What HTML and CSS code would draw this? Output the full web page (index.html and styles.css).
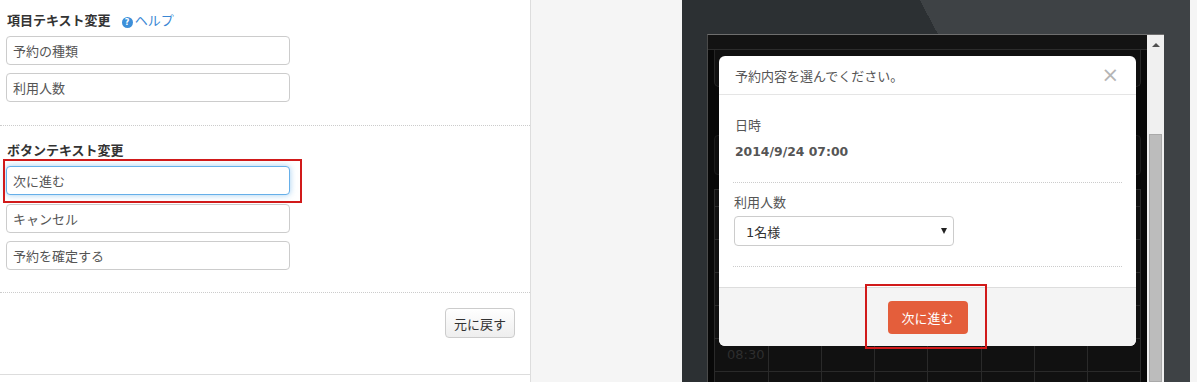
FILE: index.html
```html
<!DOCTYPE html>
<html>

<head>
    <meta charset="utf-8">
    <title>ボタンテキスト設定</title>
    <link rel="stylesheet" href="styles.css">
</head>

<body>
    <div id="page">
        <div id="settings">
            <div class="section">
                <h3 class="label">項目テキスト変更<a class="help" href="#"><span class="helpIcon">?</span>ヘルプ</a></h3>
                <input class="textInput" type="text" value="予約の種類">
                <input class="textInput" type="text" value="利用人数">
            </div>
            <div class="section">
                <h3 class="label">ボタンテキスト変更</h3>
                <div class="marked markInput">
                    <input class="textInput focused" type="text" value="次に進む">
                </div>
                <input class="textInput afterMark" type="text" value="キャンセル">
                <input class="textInput" type="text" value="予約を確定する">
            </div>
            <div class="section actions">
                <button class="resetButton">元に戻す</button>
            </div>
        </div>

        <div id="gutter"></div>

        <div id="preview">
            <div id="screen">
                <div id="calendar">
                    <div class="topBar"></div>
                    <div class="summary"></div>
                    <div class="dayBox"></div>
                    <div id="timeGrid"></div>

                    <!-- modal shown over the calendar -->
                    <div id="modal">
                        <div class="modalHeader">
                            <span>予約内容を選んでください。</span>
                            <span class="close">&times;</span>
                        </div>
                        <div class="modalBody">
                            <div class="field">
                                <div class="fieldName">日時</div>
                                <div class="fieldValue">2014/9/24 07:00</div>
                            </div>
                            <div class="field">
                                <div class="fieldName">利用人数</div>
                                <div class="select">
                                    <span>1名様</span>
                                    <span class="caret"></span>
                                </div>
                            </div>
                        </div>
                        <div class="modalFooter">
                            <div class="marked markButton">
                                <button class="nextButton">次に進む</button>
                            </div>
                        </div>
                    </div>
                </div>
                <div id="scrollbar">
                    <div class="arrowUp"></div>
                    <div class="thumb"></div>
                </div>
            </div>
        </div>

        <div id="edge"></div>
    </div>
    <script type="text/javascript">
    // background time table under the modal (only 08:30 shows below it)
    var times = ["", "", "", "", "", "08:30", ""];
    var grid = document.getElementById("timeGrid");

    for (var i = 0; i < times.length; i++) {
        var row = document.createElement("div");
        row.className = i == 0 ? "timeRow headRow" : "timeRow";
        var label = document.createElement("div");
        label.className = "timeLabel";
        label.innerText = times[i];
        row.appendChild(label);
        for (var j = 0; j < 7; j++) {
            var slot = document.createElement("div");
            slot.className = "slot";
            row.appendChild(slot);
        }
        grid.appendChild(row);
    }
    </script>
</body>

</html>
```

FILE: styles.css
```css
* {
    box-sizing: border-box;
}

body {
    margin: 0;
    font-family: "DejaVu Sans", "Noto Sans CJK JP", sans-serif;
    font-size: 13px;
    color: #333;
}

#page {
    display: flex;
    height: 382px;
    overflow: hidden;
}

/* left settings panel */

#settings {
    width: 531px;
    background: #fff;
    border-right: 1px solid #ddd;
}

.section {
    padding: 11px 0 23px 6px;
    border-bottom: 1px dotted #ccc;
}

.section + .section {
    padding: 15px 0 22px 6px;
}

.label {
    margin: 0 0 7px 1px;
    font-size: 13px;
    line-height: 18px;
    font-weight: bold;
    color: #333;
    font-family: "Noto Sans CJK JP", sans-serif;
}

.help {
    margin-left: 11px;
    color: #3a87d4;
    text-decoration: none;
    font-weight: normal;
}

.helpIcon {
    display: inline-block;
    width: 11px;
    height: 11px;
    margin-right: 2px;
    border-radius: 50%;
    background: #3d8fd9;
    color: #fff;
    font-size: 8px;
    line-height: 11px;
    font-weight: bold;
    text-align: center;
    vertical-align: 0;
    font-family: "DejaVu Sans", sans-serif;
}

.textInput {
    display: block;
    width: 284px;
    height: 29px;
    margin: 0;
    padding: 0 6px;
    border: 1px solid #ccc;
    border-radius: 4px;
    font-family: "Noto Sans CJK JP", sans-serif;
    font-size: 13px;
    color: #555;
    background: #fff;
}

.textInput + .textInput {
    margin-top: 8px;
}

.afterMark {
    margin-top: 9px;
}

.focused {
    border-color: #66afe9;
    box-shadow: 0 0 6px rgba(102, 175, 233, 0.6);
    outline: none;
}

.marked {
    position: relative;
    width: max-content;
}

.marked::after {
    content: "";
    position: absolute;
    border: 2px solid #d11a1a;
    pointer-events: none;
}

.markInput::after {
    left: -3px;
    right: -12px;
    top: -7px;
    bottom: -8px;
}

.section.actions {
    display: flex;
    justify-content: flex-end;
    padding: 15px 15px 36px 0;
    border-bottom: 1px solid #ddd;
}

.resetButton {
    width: 70px;
    height: 30px;
    padding: 0;
    border: 1px solid #ccc;
    border-radius: 4px;
    background: linear-gradient(#fff, #eee);
    color: #333;
    font-family: "Noto Sans CJK JP", sans-serif;
    font-size: 13px;
}

#gutter {
    width: 151px;
    background: #f5f5f5;
}

#edge {
    width: 7px;
    background: #f5f5f5;
}

/* dark preview area */

#preview {
    width: 508px;
    padding: 34px 0 0 25px;
    background: linear-gradient(62deg, #2c3033 62%, #3e4245 62%);
}

#screen {
    display: flex;
    width: 457px;
    height: 348px;
    border-top: 1px solid #6e6e6e;
    border-left: 1px solid #4a4a4a;
}

#calendar {
    position: relative;
    flex: 1;
    background: #080808;
}

.topBar {
    height: 15px;
    background: #131313;
    border-bottom: 1px solid #2c2c2c;
}

.summary {
    height: 37px;
    margin: 0 6px;
    background: #101010;
    border: 1px solid #262626;
    border-top: none;
    border-radius: 0 0 5px 5px;
}

.dayBox {
    height: 40px;
    margin: 48px 6px 0;
    background: #0d0d0d;
    border: 1px solid #1c1c1c;
    border-radius: 4px;
}

#timeGrid {
    margin: 14px 6px 0;
    border-left: 1px solid #2a2a2a;
    background: #111;
}

.timeRow {
    display: grid;
    grid-template-columns: 54px repeat(7, 1fr);
    height: 33px;
    border-top: 1px solid #2a2a2a;
}

.headRow {
    height: 17px;
}

.timeLabel {
    padding: 7px 0 0 12px;
    color: #2e2e2e;
    font-size: 13px;
    line-height: 18px;
    border-right: 1px solid #2a2a2a;
}

.slot {
    border-right: 1px solid #2a2a2a;
}

#scrollbar {
    position: relative;
    width: 17px;
    background: #f0f0f0;
}

.arrowUp {
    position: absolute;
    left: 5px;
    top: 8px;
    border-left: 4px solid transparent;
    border-right: 4px solid transparent;
    border-bottom: 4px solid #505050;
}

.thumb {
    position: absolute;
    left: 2px;
    right: 2px;
    top: 99px;
    bottom: 0;
    background: #bcbcbc;
    border: 1px solid #a9a9a9;
}

/* modal */

#modal {
    position: absolute;
    left: 11px;
    top: 21px;
    width: 417px;
    background: #fff;
    border-radius: 6px;
    font-family: "Noto Sans CJK JP", sans-serif;
}

.modalHeader {
    display: flex;
    justify-content: space-between;
    align-items: center;
    height: 39px;
    padding: 0 17px 0 16px;
    border-bottom: 1px solid #e5e5e5;
    color: #555;
}

.close {
    font-family: "DejaVu Sans", sans-serif;
    font-size: 21px;
    color: #b5b5b5;
    line-height: 20px;
}

.modalBody {
    padding: 0 14px 20px;
}

.field {
    padding: 21px 2px 21px;
    border-bottom: 1px dotted #ccc;
}

.field + .field {
    padding: 10px 1px 20px;
}

.fieldName {
    line-height: 18px;
    color: #555;
}

.fieldValue {
    margin-top: 9px;
    line-height: 18px;
    font-family: "DejaVu Sans", sans-serif;
    font-size: 12.4px;
    font-weight: bold;
    color: #555;
}

.select {
    display: flex;
    justify-content: space-between;
    align-items: center;
    width: 220px;
    height: 30px;
    margin-top: 5px;
    padding: 0 6px 0 11px;
    border: 1px solid #ccc;
    border-radius: 4px;
    color: #333;
    font-family: "DejaVu Sans", "Noto Sans CJK JP", sans-serif;
}

.caret {
    border-left: 3px solid transparent;
    border-right: 3px solid transparent;
    border-top: 6px solid #222;
}

.modalFooter {
    display: flex;
    justify-content: center;
    padding: 13px 0 12px;
    background: #f4f4f4;
    border-top: 1px solid #ddd;
    border-radius: 0 0 6px 6px;
}

.nextButton {
    display: block;
    width: 80px;
    height: 33px;
    padding: 0;
    border: none;
    border-radius: 4px;
    background: #e45e3b;
    color: #fff;
    font-family: "Noto Sans CJK JP", sans-serif;
    font-size: 13px;
}

.markButton::after {
    left: -23px;
    right: -19px;
    top: -17px;
    bottom: -15px;
}
```
